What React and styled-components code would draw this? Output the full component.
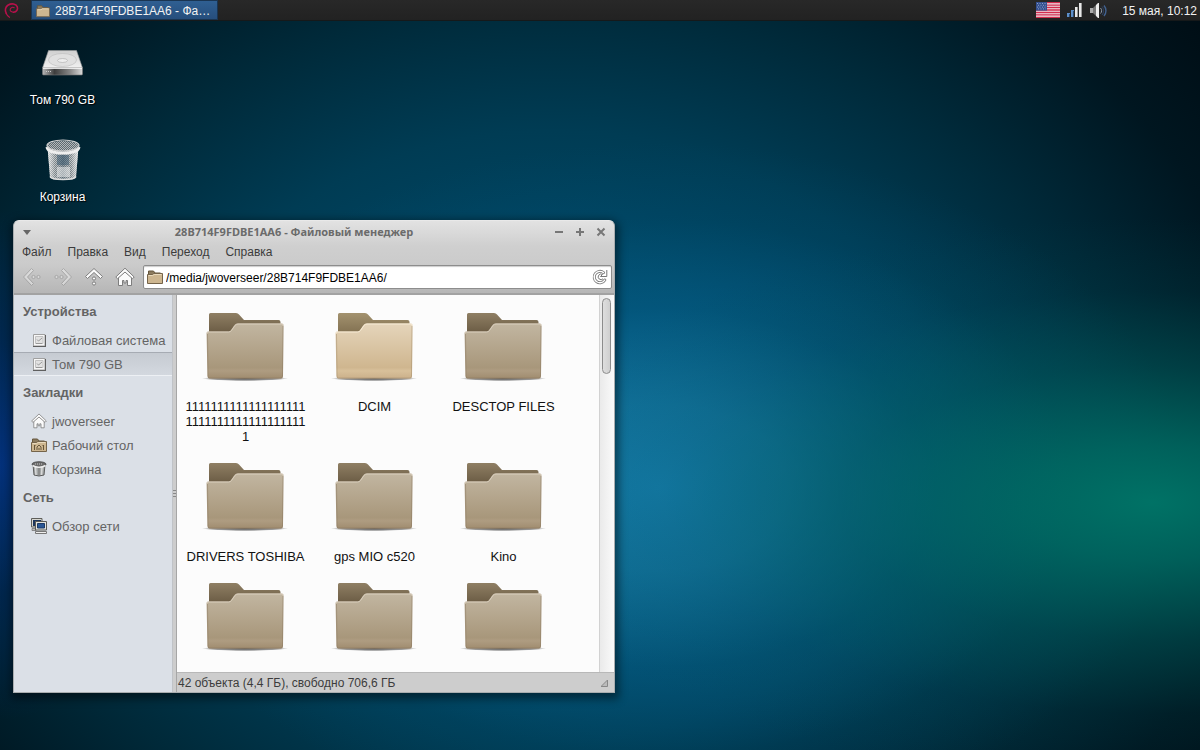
import React, { useState } from "react";
import styled, { createGlobalStyle } from "styled-components";

const GlobalStyle = createGlobalStyle`
  * {
    box-sizing: border-box;
  }
  body {
    margin: 0;
    background: #00121b;
    font: 12px/15px "Liberation Sans", Arial, sans-serif;
  }
  button, input {
    margin: 0;
    padding: 0;
    border: 0;
    background: none;
    color: inherit;
    font: inherit;
  }
  svg {
    display: block;
    flex: none;
  }
  ul {
    margin: 0;
    padding: 0;
    list-style: none;
  }
`;

const Desktop = styled.div`
  position: relative;
  display: flex;
  flex-direction: column;
  min-height: 100vh;
  overflow: hidden;
  background:
    radial-gradient(54% 38% at 96% 67%, rgba(0, 118, 104, 0.95) 0%, rgba(0, 110, 100, 0.82) 20%, rgba(0, 92, 90, 0.5) 48%, rgba(0, 74, 78, 0.18) 74%, rgba(0, 64, 70, 0) 100%),
    radial-gradient(44% 46% at 55% 65%, rgba(22, 128, 176, 0.95) 0%, rgba(20, 120, 164, 0.86) 24%, rgba(6, 100, 144, 0.5) 52%, rgba(0, 84, 122, 0.18) 78%, rgba(0, 80, 120, 0) 100%),
    radial-gradient(14% 34% at 0% 62%, rgba(4, 50, 130, 0.9) 0%, rgba(2, 38, 100, 0.5) 50%, rgba(0, 30, 70, 0) 100%),
    radial-gradient(62% 78% at 46% 58%, #004d72 0%, #004664 30%, #003c54 52%, #002a3a 74%, #001620 96%, #000c13 116%);
`;

const Panel = styled.header`
  display: flex;
  align-items: center;
  height: 21px;
  padding: 0 3px 0 4px;
  background: linear-gradient(#282828, #222);
  border-bottom: 1px solid #16191a;
  color: #f2f2f2;
`;
const MenuButton = styled.button`
  display: flex;
  margin-right: 10px;
`;
const TaskButton = styled.button`
  display: flex;
  align-items: center;
  gap: 5px;
  width: 187px;
  height: 20px;
  padding: 2px 4px 0 4px;
  background: linear-gradient(#2f5f92, #264e7c);
  border: 1px solid #1a3552;
  white-space: nowrap;
`;
const Tray = styled.div`
  display: flex;
  align-items: center;
  gap: 7px;
  margin-left: auto;
`;
const Clock = styled.time`
  margin: 2px 0 0 7px;
`;

const DesktopIcons = styled.ul`
  display: flex;
  flex-direction: column;
  gap: 27px;
  width: 125px;
  padding-top: 17px;
`;
const DesktopIcon = styled.li`
  display: flex;
  flex-direction: column;
  align-items: center;
  gap: 7px;
  color: #fff;
  text-shadow: 1px 1px 1px #000;
`;

const Window = styled.main`
  position: absolute;
  top: 220px;
  left: 13px;
  width: 602px;
  overflow: hidden;
  background: #cdcdcd;
  border: 1px solid #a9adaf;
  border-top-color: #e9e9e9;
  border-radius: 6px 6px 0 0;
  box-shadow: 1px 3px 9px 3px rgba(0, 0, 0, 0.45);
  color: #3c3c3c;
`;
const Chrome = styled.div`
  background: linear-gradient(#e2e2e2, #cfcfcf 35%, #cbcbcb 60%, #b6b6b6);
  border-bottom: 2px solid #a2a2a2;
`;
const TitleBar = styled.div`
  display: flex;
  align-items: center;
  height: 22px;
  padding: 0 3px 0 7px;
  color: #6b6b6b;
`;
const Title = styled.h1`
  flex: 1;
  margin: 0;
  padding-left: 7px;
  font: bold 11px/22px "Noto Sans", "Open Sans", sans-serif;
  text-align: center;
  white-space: nowrap;
`;
const WindowButton = styled.button`
  display: flex;
  justify-content: center;
  width: ${(p) => (p.$narrow ? "12px" : "21px")};
`;
const MenuBar = styled.nav`
  display: flex;
  gap: 16px;
  padding: 2px 8px 3px;
`;
const Toolbar = styled.div`
  display: flex;
  align-items: center;
  gap: 6px;
  height: 30px;
  padding: 0 2px 2px 5px;
`;
const ToolButton = styled.button`
  display: flex;
  justify-content: center;
  width: 25px;
  &:disabled {
    opacity: 0.4;
  }
`;
const PathBar = styled.form`
  display: flex;
  flex: 1;
  align-items: center;
  gap: 3px;
  height: 24px;
  padding: 0 3px;
  background: #fff;
  border: 1px solid #8d8d8d;
  border-radius: 2px;
  box-shadow: inset 0 1px 1px #ccc;
`;
const PathInput = styled.input`
  flex: 1;
  min-width: 0;
  height: 20px;
  padding-top: 1px;
  color: #000;
  outline: none;
`;

const Body = styled.div`
  display: flex;
  height: 397px;
`;
const Sidebar = styled.aside`
  width: 159px;
  background: #dbe0e7;
  border-right: 1px solid #c0c3c7;
  color: #646464;
  font-size: 13px;
`;
const GroupTitle = styled.h2`
  margin: 0;
  padding: 0 9px;
  font: bold 13px/33px "Liberation Sans", Arial, sans-serif;
`;
const Place = styled.button`
  display: flex;
  align-items: center;
  gap: 5px;
  width: 100%;
  height: 24px;
  padding-left: 17px;
  white-space: nowrap;
  ${(p) =>
    p.$selected &&
    `
    background: linear-gradient(#c6cbd2, #d3d8df);
    border-top: 1px solid #a6abb3;
    border-bottom: 1px solid #edf0f4;
  `}
`;
const Splitter = styled.div`
  display: flex;
  flex-direction: column;
  align-items: center;
  justify-content: center;
  gap: 2px;
  width: 4px;
  background: #cdcdcd;
  border-right: 1px solid #a6a6a6;
`;
const Grip = styled.span`
  width: 3px;
  height: 1px;
  background: #888;
`;
const Content = styled.div`
  display: flex;
  flex: 1;
  flex-direction: column;
  min-width: 0;
`;
const View = styled.div`
  display: flex;
  flex: 1;
  min-height: 0;
  overflow: hidden;
  background: #fcfcfc;
`;
const Files = styled.ul`
  display: grid;
  flex: 1;
  grid-template-columns: repeat(auto-fill, 129px);
  grid-auto-rows: max-content;
  row-gap: 9px;
  padding: 8px 4px 0;
  color: #111;
  font-size: 13px;
`;
const File = styled.li`
  display: flex;
  flex-direction: column;
  align-items: center;
`;
const FileName = styled.span`
  width: 120px;
  overflow-wrap: anywhere;
  text-align: center;
`;
const ScrollTrack = styled.div`
  width: 15px;
  padding: 3px 3px 0 2px;
  background: linear-gradient(90deg, #eaeaea, #fafafa);
  border-left: 1px solid #d2d2d2;
`;
const ScrollThumb = styled.div`
  width: 9px;
  height: 76px;
  background: linear-gradient(90deg, #dedede, #cfcfcf);
  border: 1px solid #8c8c8c;
  border-radius: 5px;
`;
const StatusBar = styled.footer`
  display: flex;
  align-items: center;
  justify-content: space-between;
  height: 20px;
  padding: 2px 6px 0 1px;
  border-top: 1px solid #b8b8b8;
`;

const Swirl = () => (
  <svg width="17" height="18" viewBox="0 0 17 18" fill="none" stroke="#b8114b" strokeLinecap="round">
    <path strokeWidth="1.600" d="M2.300 12.500C.6 9.500 1.200 5.800 4.200 4 7.500 2.100 12 2.600 13.300 5.800 14.300 8.800 12.300 11 9.500 11.200" />
    <path strokeWidth="1.100" d="M9.500 11.200C6.800 11.300 5.700 9.600 6.300 8 6.900 6.400 8.800 5.900 10.200 6.700M2.300 12.500q1 2.500 3.200 3.800" />
  </svg>
);

const SmallFolder = ({ size = 16, emblem }) => (
  <svg width={size} height={size} viewBox="0 0 16 16">
    <path d="M1.500 2h5l1.500 2h5.500v4h-12z" fill="#8c7b5e" stroke="#65563c" />
    <path d="M.5 5.500h5l1.500-1h8.500v10H.500z" fill="#cdb690" stroke="#75644a" />
    <path d="M1.500 6.500h4.200l1.500-1h7.300" fill="none" stroke="#e9dabd" />
    {emblem && <path d="M3.500 8v5M6 13v-3l2-2 2 2v3M12.500 8v5M3 8.500h1.500M11.500 8.500h1.500M8 11v2" fill="none" stroke="#67563a" />}
  </svg>
);

const Flag = () => (
  <svg width="24" height="16" viewBox="0 0 24 16">
    <path fill="#efe4e8" d="M0 0h24v16H0z" />
    <path stroke="#d22c4e" strokeWidth="1.300" d="M0 .6h24M0 3.100h24M0 5.500h24M0 8h24M0 10.500h24M0 12.900h24M0 15.400h24" />
    <path fill="#34508f" d="M0 0h11v8.600H0z" />
    <path stroke="#8d9fca" strokeDasharray="1 1.500" d="M1 1.500h9M2 3.300h8M1 5.100h9M2 6.900h8" />
  </svg>
);

const Signal = () => (
  <svg width="16" height="14" viewBox="0 0 16 14">
    <path fill="#5d8fc9" d="M0 10h3v4H0zM4 7h3v7H4z" />
    <path fill="#2c4a70" d="M2 11h1v3H2zM6 8h1v6H6z" />
    <path fill="#e8e8e8" d="M8 4h3v10H8zM12 0h3v14h-3z" />
    <path fill="#9a9a9a" d="M10 4h1v10h-1zM14 0h1v14h-1z" />
  </svg>
);

const Speaker = () => (
  <svg width="18" height="17" viewBox="0 0 18 17">
    <path fill="#aaa" d="M0 6h3v5H0z" />
    <path fill="#777" d="M3 6l3-3v11l-3-3z" />
    <path fill="#ececec" d="M6 3l2-2h1v15H8l-2-2z" />
    <path fill="none" stroke="#8a98ab" d="M10.500 6c1.500 1.500 1.500 4 0 5.500" />
    <path fill="none" stroke="#2d4468" d="M12 4.500c2 2.500 2 6 0 8.500" />
    <path fill="none" stroke="#41618f" strokeWidth="1.400" d="M14 3.500c2.600 3 2.600 7.500 0 10.500" />
  </svg>
);

const DriveIcon = () => (
  <svg width="48" height="48" viewBox="0 0 48 48">
    <defs>
      <linearGradient id="driveTop" x2="0" y2="1">
        <stop stopColor="#cfcfcf" />
        <stop offset="1" stopColor="#f1f1f1" />
      </linearGradient>
      <linearGradient id="driveFront">
        <stop stopColor="#b9b9b9" />
        <stop offset=".3" stopColor="#3d3d3d" />
        <stop offset=".7" stopColor="#8a8a8a" />
        <stop offset="1" stopColor="#d9d9d9" />
      </linearGradient>
    </defs>
    <path fill="url(#driveTop)" stroke="#9a9a9a" strokeWidth=".6" d="M9.500 12.500h28l6 17.500h-40z" />
    <ellipse cx="23.500" cy="22" rx="14" ry="6.500" fill="#e0e0e0" stroke="#bbb" strokeWidth=".6" />
    <ellipse cx="23.500" cy="22.500" rx="5" ry="2" fill="#ededed" stroke="#aaa" strokeWidth=".6" />
    <path fill="url(#driveFront)" stroke="#777" strokeWidth=".6" d="M3.500 30h40v6q0 1-1 1h-38q-1 0-1-1z" />
    <path stroke="#fff" d="M4 30.300h39" />
    <path stroke="#ccc" strokeDasharray="1 1" d="M7 33.500h6" />
  </svg>
);

const BinIcon = () => (
  <svg width="48" height="48" viewBox="0 -3 48 48">
    <defs>
      <pattern id="mesh" width="2" height="2" patternUnits="userSpaceOnUse">
        <path fill="#b4b9bb" d="M0 0h2v2H0z" />
        <path fill="#5f6a70" d="M0 0h1v1H0zM1 1h1v1H1z" />
      </pattern>
      <linearGradient id="binShade">
        <stop stopColor="#fff" stopOpacity=".8" />
        <stop offset=".25" stopColor="#fff" stopOpacity=".15" />
        <stop offset=".5" stopColor="#506678" stopOpacity=".35" />
        <stop offset=".75" stopColor="#fff" stopOpacity=".15" />
        <stop offset="1" stopColor="#fff" stopOpacity=".8" />
      </linearGradient>
    </defs>
    <path fill="url(#mesh)" d="M8.500 9l2.500 30q1 3 13 3t13-3l2.500-30z" />
    <path fill="url(#binShade)" d="M8.500 9l2.500 30q1 3 13 3t13-3l2.500-30z" />
    <path fill="#31526a" opacity=".45" d="M18 17h12v10H18z" />
    <path fill="#f3f3f3" opacity=".5" d="M18 29h13v10H18z" />
    <path fill="none" stroke="#dedede" strokeWidth="1.500" d="M11 38.500q1 3 13 3t13-3" />
    <ellipse cx="24" cy="8" rx="16" ry="5" fill="url(#mesh)" />
    <path fill="none" stroke="#eee" strokeWidth="3" d="M8 9q1 6 16 6t16-6" />
    <ellipse cx="24" cy="7.500" rx="16" ry="5.500" fill="none" stroke="#d0d0d0" strokeWidth="1.200" />
  </svg>
);

const SmallBin = () => (
  <svg width="16" height="16" viewBox="0 0 16 16">
    <path fill="#a4a8a8" stroke="#5c5c5c" d="M2 3.500l1 10.500q5 2 10 0l1-10.500z" />
    <path stroke="#d9d9d9" strokeWidth="1.500" d="M4.500 6l.5 8M11 6l-.5 8" />
    <path stroke="#858585" strokeWidth="1.500" d="M8 7v7" />
    <ellipse cx="8" cy="3.200" rx="7" ry="2.500" fill="#6b6b6b" stroke="#333" strokeWidth=".7" />
    <path fill="none" stroke="#eee" strokeWidth="1.500" d="M1.500 4.500q6.500 3.500 13 0" />
    <path stroke="#ccc" strokeDasharray="1 1" d="M4 3h8" />
  </svg>
);

const SmallDrive = () => (
  <svg width="16" height="16" viewBox="0 0 16 16">
    <path fill="#f7f7f7" stroke="#a0a0a0" d="M2.500 2.500h11.500v11.500H2.500z" />
    <path stroke="#5f5f5f" d="M2 14.500h13M14.500 3v12" />
    <path fill="#e2e2e2" stroke="#c2c2c2" d="M4.500 4.500h7.500v7H4.500z" />
    <path fill="none" stroke="#999" d="M6 7.500l1.500 1.500 3.500-3M5 11.500h6" />
  </svg>
);

const HouseIcon = ({ size = 16 }) => (
  <svg width={size} height={size} viewBox="0 0 20 20" fill="#fbfbfb" stroke="#7d7d7d" strokeLinejoin="round">
    <path d="M3.500 10v8.500h4v-5h1.500v2.500h2v-2.500h1.500v5h4V10L10 4.500z" />
    <path d="M10 1.200L.8 10l1.700 1.700L10 5l7.500 6.700L19.200 10z" />
  </svg>
);

const NetworkIcon = () => (
  <svg width="16" height="16" viewBox="0 0 16 16">
    <path fill="#d7d7d0" stroke="#5e5e5a" d="M.5.500h10.500v8.500H.500z" />
    <path fill="#1c355c" d="M2 2h8v6H2z" />
    <path fill="#bbb" stroke="#777" strokeWidth=".8" d="M1 10.500h4v2H1z" />
    <path fill="#e5e5df" stroke="#5a5a55" d="M4.500 3.500h11v8.500H4.500z" />
    <path fill="#2a5795" stroke="#1c3a66" d="M6.500 5.500h7v4.500h-7z" />
    <path fill="#eee" stroke="#777" d="M4.500 13.500h11v2h-11z" />
  </svg>
);

// The arrow is drawn pointing up and turned for back and forward
const ArrowIcon = ({ turn = 0 }) => (
  <svg width="20" height="20" viewBox="0 0 20 20" fill="#fbfbfb" stroke="#7d7d7d" strokeLinejoin="round">
    <g transform={`rotate(${turn} 10 10)`}>
      <path d="M10 1.500L1.500 9.500l2 2L10 5.500l6.500 6 2-2z" />
      <circle cx="10" cy="11.500" r="1.600" />
      <circle cx="10" cy="16.500" r="1.600" />
    </g>
  </svg>
);

const ReloadIcon = () => (
  <svg width="16" height="16" viewBox="0 0 16 16" fill="none">
    <path stroke="#777" strokeWidth="3" strokeLinecap="round" d="M12.800 11A5.700 5.700 0 1 1 11.500 3.600" />
    <path fill="#fff" stroke="#777" strokeLinejoin="round" d="M14.800 1v6.500H8.500l2-2a2.800 2.800 0 1 0 .5 4.300" />
    <path stroke="#fff" strokeWidth="1.400" strokeLinecap="round" d="M12.800 11A5.700 5.700 0 1 1 11.500 3.600" />
  </svg>
);

const BigFolder = ({ light }) => {
  const id = light ? "light" : "tan";
  return (
    <svg width="96" height="96" viewBox="0 0 96 96">
      <defs>
        <linearGradient id={`${id}Back`} x2="0" y2="1">
          <stop stopColor={light ? "#a3926f" : "#8f7f64"} />
          <stop offset="1" stopColor={light ? "#7d6c4d" : "#65563f"} />
        </linearGradient>
        <linearGradient id={`${id}Front`} x2="0" y2="1">
          <stop stopColor={light ? "#e5d5bb" : "#c2b6a1"} />
          <stop offset=".8" stopColor={light ? "#cfb68f" : "#a8977b"} />
          <stop offset=".86" stopColor={light ? "#d8c09a" : "#ae9c81"} />
          <stop offset="1" stopColor={light ? "#cbb08a" : "#a08c6f"} />
        </linearGradient>
        <radialGradient id="folderShadow">
          <stop stopColor="#222" stopOpacity=".8" />
          <stop offset=".75" stopColor="#222" stopOpacity=".45" />
          <stop offset="1" stopColor="#222" stopOpacity="0" />
        </radialGradient>
      </defs>
      <ellipse cx="47" cy="75.500" rx="43" ry="2.500" fill="url(#folderShadow)" />
      <path fill={`url(#${id}Back)`} d="M11 11.500q0-1.500 1.500-1.500H38q2 0 3 1.500L46 17h34.500q2 0 2 2v14H11z" />
      <path fill={`url(#${id}Front)`} d="M8.500 30.500q0-2 1.500-2H30q2 0 3-1.500l3.500-5q1-1.500 3-1.500H84q1.500 0 1.500 1.500l-.5 51q0 2.500-2 2.500h-71.500q-2 0-2-2.500z" />
      <path fill="none" stroke={light ? "#f8ecd6" : "#dacfbe"} d="M9 30.500q0-1.500 1.500-1.500h20q2 0 3-1.500l3.500-5q1-1.500 3-1.500h43.500q1.500 0 1.500 1.500" />
      <path fill="none" stroke={light ? "#a38e6c" : "#8b7a61"} opacity=".5" d="M85 23l-.5 50q0 2-1.500 2h-71.500q-1.500 0-1.500-2l-.5-42" />
    </svg>
  );
};

const MENU = ["Файл", "Правка", "Вид", "Переход", "Справка"];

const PLACES = [
  {
    title: "Устройства",
    items: [
      { name: "Файловая система", icon: <SmallDrive /> },
      { name: "Том 790 GB", icon: <SmallDrive /> },
    ],
  },
  {
    title: "Закладки",
    items: [
      { name: "jwoverseer", icon: <HouseIcon /> },
      { name: "Рабочий стол", icon: <SmallFolder emblem /> },
      { name: "Корзина", icon: <SmallBin /> },
    ],
  },
  { title: "Сеть", items: [{ name: "Обзор сети", icon: <NetworkIcon /> }] },
];

const FILES = [
  { name: "1".repeat(39) },
  { name: "DCIM", light: true },
  { name: "DESCTOP FILES" },
  { name: "DRIVERS TOSHIBA" },
  { name: "gps MIO c520" },
  { name: "Kino" },
  {},
  {},
  {},
];

/**
 * File manager window
 */
function FileManager() {
  const [path, setPath] = useState("/media/jwoverseer/28B714F9FDBE1AA6/");
  const [place, setPlace] = useState("Том 790 GB");
  return (
    <Window>
      <Chrome>
        <TitleBar>
          <WindowButton $narrow aria-label="Меню окна">
            <svg width="8" height="5" viewBox="0 0 8 5"><path fill="#666" d="M0 0h8L4 5z" /></svg>
          </WindowButton>
          <Title>28B714F9FDBE1AA6 - Файловый менеджер</Title>
          <WindowButton aria-label="Свернуть">
            <svg width="10" height="10" viewBox="0 0 10 10"><path stroke="#777" strokeWidth="2" d="M1 5h8" /></svg>
          </WindowButton>
          <WindowButton aria-label="Развернуть">
            <svg width="10" height="10" viewBox="0 0 10 10"><path stroke="#777" strokeWidth="2" d="M1 5h8M5 1v8" /></svg>
          </WindowButton>
          <WindowButton aria-label="Закрыть">
            <svg width="10" height="10" viewBox="0 0 10 10"><path stroke="#777" strokeWidth="2" d="M1.500 1.500l7 7M8.500 1.500l-7 7" /></svg>
          </WindowButton>
        </TitleBar>
        <MenuBar>
          {MENU.map((item) => <button key={item}>{item}</button>)}
        </MenuBar>
        <Toolbar>
          <ToolButton disabled aria-label="Назад"><ArrowIcon turn={-90} /></ToolButton>
          <ToolButton disabled aria-label="Вперёд"><ArrowIcon turn={90} /></ToolButton>
          <ToolButton aria-label="Вверх"><ArrowIcon /></ToolButton>
          <ToolButton aria-label="Домой"><HouseIcon size={20} /></ToolButton>
          <PathBar onSubmit={(e) => e.preventDefault()}>
            <SmallFolder />
            <PathInput aria-label="Путь" value={path} onChange={(e) => setPath(e.target.value)} />
            <button aria-label="Обновить"><ReloadIcon /></button>
          </PathBar>
        </Toolbar>
      </Chrome>
      <Body>
        <Sidebar>
          {PLACES.map((group) => (
            <section key={group.title}>
              <GroupTitle>{group.title}</GroupTitle>
              {group.items.map((item) => (
                <Place key={item.name} $selected={item.name === place} onClick={() => setPlace(item.name)}>
                  {item.icon}
                  {item.name}
                </Place>
              ))}
            </section>
          ))}
        </Sidebar>
        <Splitter><Grip /><Grip /><Grip /></Splitter>
        <Content>
          <View>
            <Files>
              {FILES.map((file, i) => (
                <File key={i}>
                  <BigFolder light={file.light} />
                  <FileName>{file.name}</FileName>
                </File>
              ))}
            </Files>
            <ScrollTrack><ScrollThumb /></ScrollTrack>
          </View>
          <StatusBar>
            42 объекта (4,4 ГБ), свободно 706,6 ГБ
            <svg width="7" height="7" viewBox="0 0 7 7"><path fill="#bbb" stroke="#888" d="M6.500 0v6.500H0z" /></svg>
          </StatusBar>
        </Content>
      </Body>
    </Window>
  );
}

export default function App() {
  return (
    <>
      <GlobalStyle />
      <Desktop>
        <Panel>
          <MenuButton aria-label="Меню приложений"><Swirl /></MenuButton>
          <TaskButton>
            <SmallFolder size={14} />
            28B714F9FDBE1AA6 - Фа…
          </TaskButton>
          <Tray>
            <Flag />
            <Signal />
            <Speaker />
            <Clock>15 мая, 10:12</Clock>
          </Tray>
        </Panel>
        <DesktopIcons>
          <DesktopIcon><DriveIcon />Том 790 GB</DesktopIcon>
          <DesktopIcon><BinIcon />Корзина</DesktopIcon>
        </DesktopIcons>
        <FileManager />
      </Desktop>
    </>
  );
}
